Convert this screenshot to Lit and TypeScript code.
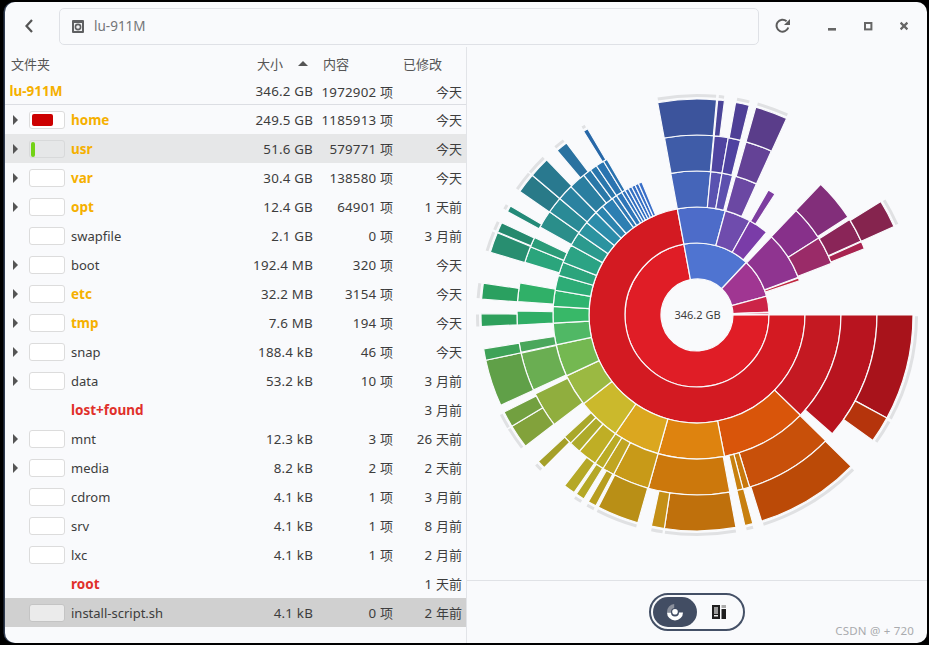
import { LitElement, html, css, svg } from "lit";
import { customElement } from "lit/decorators.js";

const CX = 697, CY = 315, W = 36;
type Seg = [number, number, number, string];
const S: Seg[] = [
  // ring 0
  [0, 0, 259.5, "#e01d26"], [0, 259.5, 313.2, "#4f74d1"], [0, 313.2, 344.8, "#a03692"], [0, 344.8, 357.7, "#cc2447"], [0, 357.9, 359.4, "#d44060"],
  // ring 1
  [1, 0, 259.5, "#d31a22"], [1, 259.5, 285.2, "#4d6cc9"], [1, 285.2, 299.3, "#6f4cad"], [1, 299.3, 310, "#7a3ca8"], [1, 313.6, 339.6, "#8f3490"], [1, 339.9, 341.5, "#c02840"],
  // ring 2
  [2, 0, 44.1, "#c41922"], [2, 44.1, 79, "#d9550a"], [2, 79, 105.7, "#de830f"], [2, 105.7, 124.5, "#dba71f"], [2, 124.5, 142, "#cbb92c"],
  [2, 142, 155, "#9bb942"], [2, 155, 168, "#74b851"], [2, 168, 176.8, "#50b865"], [2, 176.8, 183.4, "#38b868"], [2, 183.4, 189.9, "#2fb46f"],
  [2, 189.9, 196, "#2dac76"], [2, 196, 201.5, "#2ca47c"], [2, 201.5, 209, "#2ba384"], [2, 209, 214.6, "#2b9a8e"], [2, 214.6, 220, "#2b93a0"],
  [2, 220, 225.4, "#2c8caa"], [2, 225.4, 229, "#2c84ae"], [2, 229, 234, "#2d7fb2"], [2, 234, 236, "#2e78b4"], [2, 236, 238.5, "#2f76b8"],
  [2, 238.5, 240, "#3072bc"], [2, 240, 241.5, "#3270c0"], [2, 241.5, 243, "#3470c2"], [2, 243, 244.5, "#366fc4"], [2, 244.5, 246, "#386fc6"], [2, 246, 247.5, "#3a6fc8"],
  [2, 259.5, 275.5, "#4565b9"], [2, 275.5, 280, "#5a52b0"], [2, 280, 284.3, "#5c50ae"], [2, 285.5, 294.4, "#6b48a3"], [2, 299.7, 302.8, "#7d3da0"],
  [2, 313.5, 327.7, "#87308a"], [2, 327.7, 339, "#9a2b68"],
  // ring 3
  [3, 0, 41.3, "#b8141f"], [3, 44.3, 73, "#c8500a"], [3, 73, 75.2, "#c8780c"], [3, 75.2, 77.2, "#c8800e"], [3, 79.5, 105.7, "#cc780c"],
  [3, 105.7, 117.6, "#c89a18"], [3, 117.6, 121.5, "#c0a522"], [3, 121.5, 124.5, "#baab25"], [3, 124.5, 130.8, "#bfae25"], [3, 130.8, 134.6, "#aeaa2a"], [3, 134.6, 137.4, "#aaa82b"],
  [3, 142.5, 154, "#90ae3e"], [3, 155.4, 167.8, "#6aae52"], [3, 168, 171.4, "#4aa75c"], [3, 176.8, 181.3, "#30ae66"], [3, 184.3, 190.3, "#30b068"],
  [3, 197, 202.3, "#2ba57c"], [3, 202.3, 205.5, "#2a9c78"], [3, 209.3, 215, "#2a8e8a"], [3, 215, 220.3, "#2a8a96"], [3, 220.3, 225.5, "#2a82a0"],
  [3, 225.5, 231, "#2a7ea0"], [3, 231, 233.7, "#2a78a8"], [3, 233.7, 236, "#2a76ac"], [3, 236, 238.7, "#2a74b0"], [3, 238.7, 240, "#2a72b0"],
  [3, 259.6, 275.3, "#3f5ca8"], [3, 275.5, 280, "#4f44a0"], [3, 280, 284, "#4f42a0"], [3, 285.8, 294.4, "#644296"],
  [3, 313.4, 327, "#822e7a"], [3, 328, 335.7, "#8a2558"], [3, 336, 338.4, "#a82450"],
];
const R5: Seg[] = [
  [4, 0, 28.5, "#a8131b"],
  [4, 28.5, 35.5, "#b5340c"], [4, 44.5, 72.6, "#bb4a07"], [4, 75, 77.2, "#c8800f"], [4, 79.6, 98.7, "#bf700c"], [4, 98.7, 102.2, "#c48f16"],
  [4, 105.9, 117.2, "#b98f16"], [4, 117.9, 120.2, "#b89e20"], [4, 121.6, 124, "#b5a827"], [4, 124.7, 127.8, "#b5a827"], [4, 135, 137.3, "#a5a029"],
  [4, 142.6, 149, "#82a23b"], [4, 149, 153.3, "#72a040"], [4, 155.3, 167.9, "#60a048"], [4, 167.9, 171, "#3ea258"], [4, 176.9, 180.3, "#2ea05c"], [4, 184.2, 188.5, "#2aa060"],
  [4, 196.9, 202.4, "#288e70"], [4, 202.6, 205.3, "#25896e"], [4, 208.6, 210.3, "#238a78"], [4, 214.9, 220.3, "#297a88"], [4, 220.3, 225.9, "#29798f"], [4, 229.6, 232.8, "#2a72a0"], [4, 238.3, 239.6, "#2868a8"],
  [4, 259.5, 275.2, "#3c549c"], [4, 275.5, 277.3, "#4a4498"], [4, 280.3, 284, "#4e3f96"], [4, 285.8, 294.5, "#5a3d8a"], [4, 328.3, 335.8, "#85244e"],
];
const ARCS: [number, number][] = [
  [0.3, 28.2], [29, 35.3], [44.7, 72.4], [75.2, 77], [79.8, 98.4], [99, 102], [106, 117], [118, 120], [121.8, 123.8], [135.2, 137.1],
  [142.8, 148.8], [149.2, 153.1], [177, 180.1], [184.4, 188.3], [197, 202.2], [202.8, 205.1], [208.8, 210.1], [215, 220.1], [220.5, 225.7], [229.8, 232.6], [238.5, 239.4],
  [259.7, 275], [275.7, 277.1], [280.5, 283.8], [286, 294.3], [328.5, 335.6],
];

const pt = (r: number, a: number) => {
  const t = (a * Math.PI) / 180;
  return `${(CX + r * Math.cos(t)).toFixed(2)} ${(CY + r * Math.sin(t)).toFixed(2)}`;
};
const segPath = (ring: number, a0: number, a1: number) => {
  const r0 = 36 + ring * W, r1 = r0 + W, large = a1 - a0 > 180 ? 1 : 0;
  return `M${pt(r0, a0)}L${pt(r1, a0)}A${r1} ${r1} 0 ${large} 1 ${pt(r1, a1)}L${pt(r0, a1)}A${r0} ${r0} 0 ${large} 0 ${pt(r0, a0)}Z`;
};

type Row = { n: string; s: string; c: string; m: string; k?: string; arrow?: boolean; fill?: number; fc?: string; box?: boolean; cls?: string };
const ROWS: Row[] = [
  { n: "home", s: "249.5 GB", c: "1185913 项", m: "今天", k: "o", arrow: true, fill: 21, fc: "#cc0000", box: true },
  { n: "usr", s: "51.6 GB", c: "579771 项", m: "今天", k: "o", arrow: true, fill: 4, fc: "#73d216", box: true, cls: "hover" },
  { n: "var", s: "30.4 GB", c: "138580 项", m: "今天", k: "o", arrow: true, box: true },
  { n: "opt", s: "12.4 GB", c: "64901 项", m: "1 天前", k: "o", arrow: true, box: true },
  { n: "swapfile", s: "2.1 GB", c: "0 项", m: "3 月前", box: true },
  { n: "boot", s: "192.4 MB", c: "320 项", m: "今天", arrow: true, box: true },
  { n: "etc", s: "32.2 MB", c: "3154 项", m: "今天", k: "o", arrow: true, box: true },
  { n: "tmp", s: "7.6 MB", c: "194 项", m: "今天", k: "o", arrow: true, box: true },
  { n: "snap", s: "188.4 kB", c: "46 项", m: "今天", arrow: true, box: true },
  { n: "data", s: "53.2 kB", c: "10 项", m: "3 月前", arrow: true, box: true },
  { n: "lost+found", s: "", c: "", m: "3 月前", k: "r" },
  { n: "mnt", s: "12.3 kB", c: "3 项", m: "26 天前", arrow: true, box: true },
  { n: "media", s: "8.2 kB", c: "2 项", m: "2 天前", arrow: true, box: true },
  { n: "cdrom", s: "4.1 kB", c: "1 项", m: "3 月前", box: true },
  { n: "srv", s: "4.1 kB", c: "1 项", m: "8 月前", box: true },
  { n: "lxc", s: "4.1 kB", c: "1 项", m: "2 月前", box: true },
  { n: "root", s: "", c: "", m: "1 天前", k: "r" },
  { n: "install-script.sh", s: "4.1 kB", c: "0 项", m: "2 年前", box: true, cls: "selected" },
];

@customElement("app-root")
export class AppRoot extends LitElement {
  static styles = css`
    :host { display: block; width: 929px; height: 645px; background: #000; font-family: "Noto Sans", "Noto Sans CJK SC", sans-serif; font-size: 14px; color: #3d3d3d; overflow: hidden; }
    .window { margin: 2px 2px 2px 5px; height: 641px; background: #f9fafc; border-radius: 10px; box-shadow: -1.5px 0 0 #2f3b50; display: flex; flex-direction: column; overflow: hidden; }
    .toolbar { height: 45px; flex: none; display: flex; align-items: center; padding-top: 3px; box-sizing: border-box; }
    .back { width: 54px; box-sizing: border-box; padding-right: 7px; display: flex; justify-content: center; }
    .loc { width: 700px; height: 37px; box-sizing: border-box; border: 1px solid #dfe1e6; border-radius: 5px; display: flex; align-items: center; gap: 10px; padding-left: 12px; color: #747679; font-size: 13.5px; }
    .reload { margin-left: 16px; display: flex; }
    .wm { display: flex; margin-left: 33px; gap: 20px; align-items: center; }
    .split { flex: 1; display: flex; min-height: 0; }
    .left { width: 461px; flex: none; border-right: 1px solid #e2e4e8; }
    .right { flex: 1; display: flex; flex-direction: column; position: relative; }
    .chart { height: 533px; flex: none; border-bottom: 1px solid #e0e2e6; }
    .chart svg { display: block; }
    .foot { flex: 1; display: flex; justify-content: center; align-items: flex-start; padding-top: 12px; box-sizing: border-box; }
    .pill { width: 96px; height: 38px; box-sizing: border-box; border: 2px solid #445066; border-radius: 19px; padding: 2px; display: flex; }
    .seg { width: 44px; height: 30px; border-radius: 15px; display: flex; align-items: center; justify-content: center; }
    .seg.on { background: #424d63; }
    .mark { position: absolute; right: 13px; bottom: 5px; font-size: 11.5px; color: #a9abae; letter-spacing: 0.2px; }
    .head { height: 31px; box-sizing: border-box; padding-top: 7px; display: grid; grid-template-columns: 252px 66px 80px 1fr; line-height: 20px; color: #555; font-family: "Noto Sans CJK SC", "Noto Sans", sans-serif; font-size: 13px; }
    .head span:first-child { padding-left: 6px; }
    .sort { display: inline-block; width: 0; height: 0; border: 5px solid transparent; border-top: 0; border-bottom: 5px solid #555; margin-left: 15px; vertical-align: 3px; }
    .rootrow { height: 27px; box-sizing: border-box; border-bottom: 1px solid #dcdee3; display: grid; grid-template-columns: 241px 67px 80px 69px; align-items: center; padding-right: 4px; }
    .rootrow .nm { padding-left: 4.5px; }
    .row { height: 29px; display: grid; grid-template-columns: 24px 42px 179px 63px 80px 69px; align-items: center; padding-right: 4px; }
    .row.hover { background: #e6e7e8; }
    .row.selected { background: #d0d0d0; }
    .num { text-align: right; white-space: nowrap; font-size: 13.33px; letter-spacing: 0.2px; }
    .cjk { font-family: "Noto Sans CJK SC", sans-serif; letter-spacing: 0; font-size: 13px; }
    .nm { white-space: nowrap; font-size: 13px; }
    .o, .r { font-weight: 700; font-size: 13.5px; }
    .o { color: #f5b000; }
    .r { color: #e0302a; }
    .tri { width: 0; height: 0; border: 5px solid transparent; border-right: 0; border-left: 5px solid #555; margin-left: 8px; }
    .box { width: 36px; height: 18px; box-sizing: border-box; border: 1px solid #dcdcdc; border-radius: 3px; background: #fff; padding: 2px; display: flex; }
    .hover .box { background: transparent; border-color: #d8d9da; }
    .selected .box { background: #ebebeb; border-color: #c4c4c4; }
    .fill { height: 100%; border-radius: 2px; }
    .hover .fill { margin-left: -1px; height: 15px; margin-top: -0.5px; }
  `;

  chart() {
    const all = [...S, ...R5];
    return html`<svg width="460" height="533" viewBox="467 47 460 533" xmlns="http://www.w3.org/2000/svg">
      ${ARCS.map(([a, b]) => svg`<path d="M${pt(219.5, a)}A219.5 219.5 0 0 1 ${pt(219.5, b)}" fill="none" stroke="#e0e1e3" stroke-width="3"/>`)}
      ${all.map(([r, a, b, c]) => svg`<path d=${segPath(r, a, b)} fill=${c} stroke="#f9fafc" stroke-width="1.2" stroke-linejoin="round"/>`)}
      <text x="697.5" y="319" text-anchor="middle" font-family="Noto Sans" font-size="11" fill="#3d3d3d">346.2 GB</text>
    </svg>`;
  }

  nums(v: string) {
    const m = v.match(/^(.*?)([\u4e00-\u9fff]+)$/);
    if (!m) return v;
    return html`${m[1]}<span class="cjk">${m[2]}</span>`;
  }

  render() {
    return html`<div class="window">
      <div class="toolbar">
        <div class="back"><svg width="12" height="16" viewBox="0 0 12 16"><path d="M9 2 3.5 8 9 14" fill="none" stroke="#555" stroke-width="2.2"/></svg></div>
        <div class="loc">
          <svg width="12" height="13" viewBox="0 0 12 13"><rect width="12" height="13" rx="1" fill="#5f6062"/><rect x="2" y="3" width="8" height="8" fill="#f2f3f4"/><circle cx="6" cy="7" r="2.6" fill="none" stroke="#5f6062" stroke-width="1.6"/></svg>
          <span>lu-911M</span>
        </div>
        <div class="reload"><svg width="16" height="16" viewBox="0 0 16 16"><path d="M13.3 9.5A6 6 0 1 1 11.6 3.2" fill="none" stroke="#5c5c5c" stroke-width="2"/><path d="M15 1v6h-6z" fill="#5c5c5c"/></svg></div>
        <div class="wm">
          <svg width="16" height="16" viewBox="0 0 16 16"><rect x="4" y="10" width="8" height="2.6" fill="#666"/></svg>
          <svg width="16" height="16" viewBox="0 0 16 16"><rect x="5" y="5" width="6.4" height="6.4" fill="none" stroke="#666" stroke-width="2"/></svg>
          <svg width="16" height="16" viewBox="0 0 16 16"><path d="M4.6 4.6l6.8 6.8M11.4 4.6l-6.8 6.8" stroke="#666" stroke-width="2.2" fill="none"/></svg>
        </div>
      </div>
      <div class="split">
        <div class="left">
          <div class="head"><span>文件夹</span><span>大小<i class="sort"></i></span><span>内容</span><span>已修改</span></div>
          <div class="rootrow"><span class="nm o">lu-911M</span><span class="num">346.2 GB</span><span class="num">${this.nums("1972902 项")}</span><span class="num">${this.nums("今天")}</span></div>
          ${ROWS.map((r) => html`<div class="row ${r.cls ?? ""}">
            <span>${r.arrow ? html`<div class="tri"></div>` : ""}</span>
            <span>${r.box ? html`<div class="box">${r.fill ? html`<div class="fill" style="width:${r.fill}px;background:${r.fc}"></div>` : ""}</div>` : ""}</span>
            <span class="nm ${r.k ?? ""}">${r.n}</span>
            <span class="num">${r.s}</span>
            <span class="num">${this.nums(r.c)}</span>
            <span class="num">${this.nums(r.m)}</span>
          </div>`)}
        </div>
        <div class="right">
          <div class="chart">${this.chart()}</div>
          <div class="foot">
            <div class="pill">
              <div class="seg on"><svg width="18" height="18" viewBox="0 0 18 18"><path d="M1 9A8 8 0 0 1 8.2 1V5A4 4 0 0 0 5 9z" fill="#8b909c"/><path d="M1 9.4A8 8 0 0 0 17 9.4H13A4 4 0 0 1 5 9.4z" fill="#fff"/><circle cx="9" cy="8.8" r="2.8" fill="#fff"/></svg></div>
              <div class="seg"><svg width="14" height="14" viewBox="0 0 14 14"><rect width="8" height="14" fill="#1e1e1e"/><rect x="2" y="2" width="4" height="7" fill="#9a9a9a"/><rect x="2" y="10" width="4" height="1.5" fill="#eee"/><rect x="9.5" y="0" width="4.5" height="3" fill="#aaa"/><rect x="9.5" y="4" width="4.5" height="10" fill="#1e1e1e"/></svg></div>
            </div>
          </div>
          <div class="mark">CSDN @ + 720</div>
        </div>
      </div>
    </div>`;
  }
}
